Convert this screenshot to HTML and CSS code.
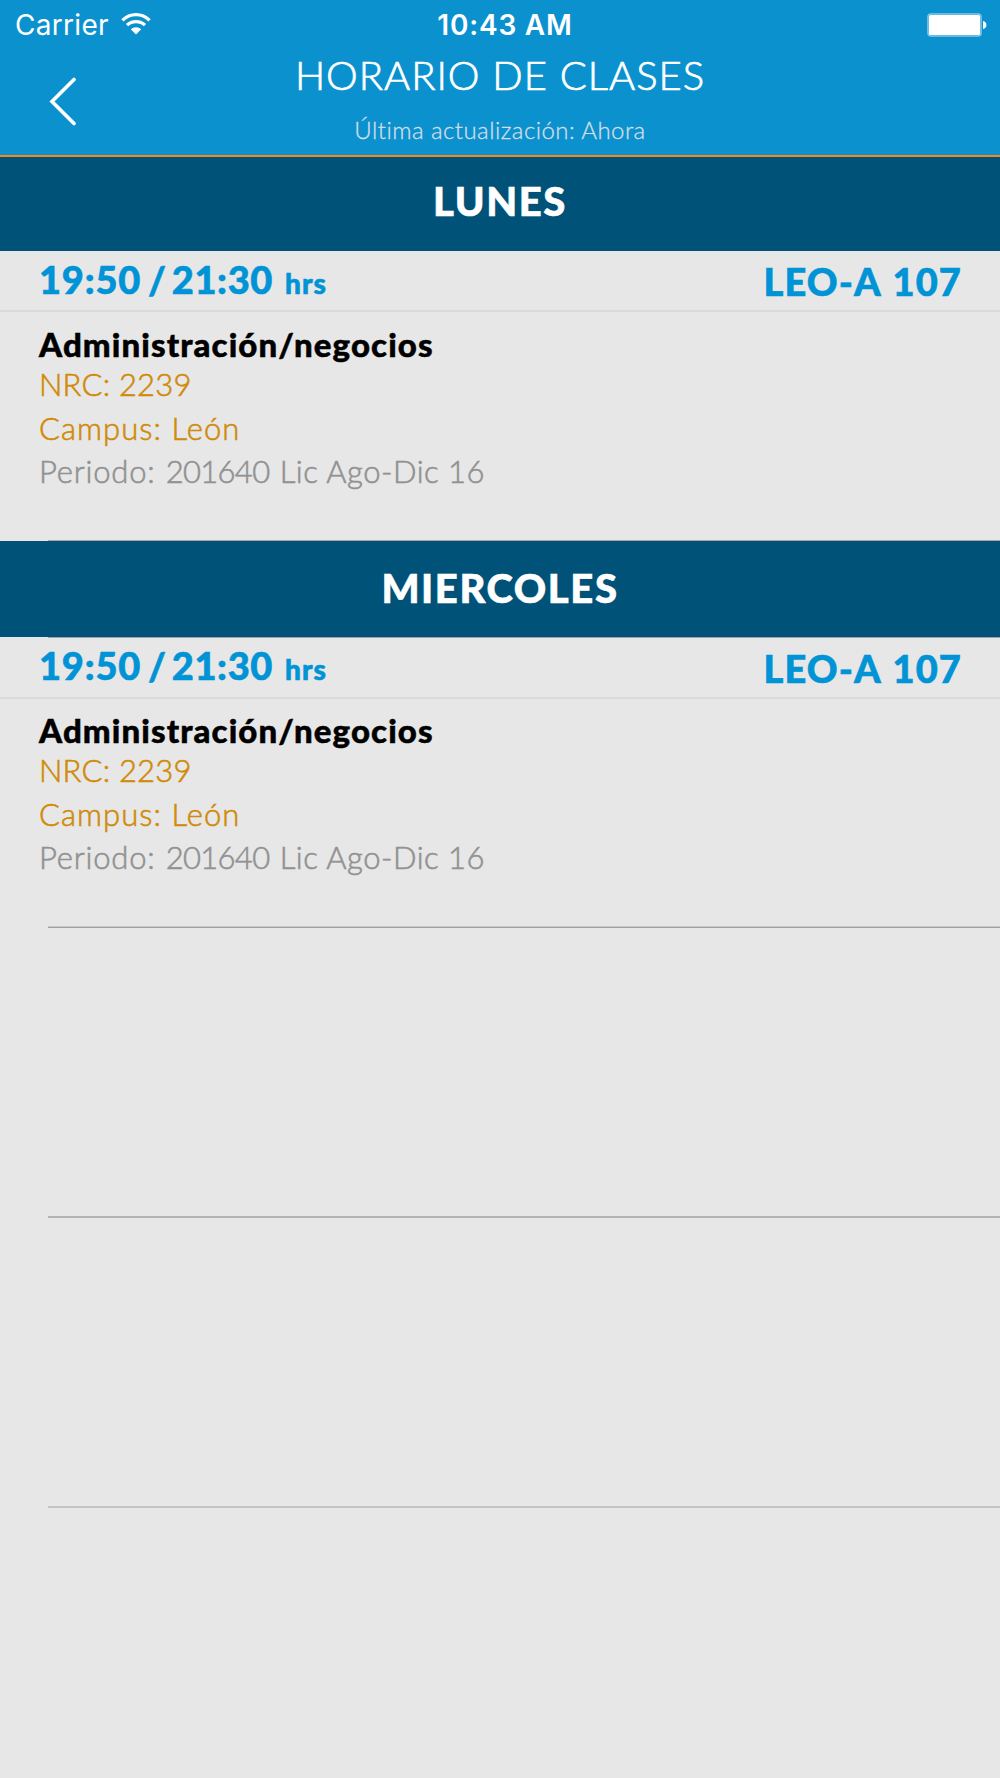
FILE: index.html
```html
<!DOCTYPE html>
<html lang="es">
<head>
<meta charset="utf-8">
<title>Horario de clases</title>
<link rel="stylesheet" href="styles.css">
</head>
<body>
<header class="header">
  <div class="status">
    <div class="carrier"><span class="carrier-name">Carrier</span>
      <svg class="wifi" width="30" height="22" viewBox="0 0 30 22"><g fill="none" stroke="#fff" stroke-width="3.2"><path d="M1.4 7.3C9-.2 21-.2 28.600 7.300"/><path d="M6 12.200C11 7.400 19 7.400 24 12.200"/></g><path d="M15 21.500L9.800 16.300C12.800 13.500 17.200 13.500 20.200 16.300Z" fill="#fff"/></svg>
    </div>
    <span class="clock">10:43 AM</span>
    <svg class="battery" width="60" height="24" viewBox="0 0 60 24"><rect x="1" y="1" width="53" height="22" rx="3" fill="#0c91cf" stroke="#86c8e7" stroke-width="1.600"/><rect x="2" y="2" width="51" height="20" rx="1.500" fill="#fff"/><path d="M56 8C60.500 8.500 60.500 15.500 56 16Z" fill="#fff"/></svg>
  </div>
  <div class="navbar">
    <svg class="back" width="28" height="50" viewBox="0 0 28 50"><path d="M25 2.500L3 24.500L25 46.500" fill="none" stroke="#fff" stroke-width="3.600" stroke-linecap="round" stroke-linejoin="miter"/></svg>
    <div class="titles">
      <h1 class="title">HORARIO DE CLASES</h1>
      <p class="updated">Última actualización: Ahora</p>
    </div>
  </div>
</header>
<main class="schedule">
  <h2 class="day day-first">LUNES</h2>
  <section class="class-row">
    <div class="slot"><div class="time"><span class="from">19:50</span><span class="slash">/</span><span class="to">21:30</span><span class="unit">hrs</span></div><div class="room">LEO-A 107</div></div>
    <div class="details"><h3 class="subject">Administración/negocios</h3><p class="nrc">NRC: 2239</p><p class="campus">Campus: León</p><p class="period">Periodo: <span class="code">201640</span> <span class="term">Lic Ago-Dic 16</span></p></div>
  </section>
  <h2 class="day">MIERCOLES</h2>
  <section class="class-row class-row-last">
    <div class="slot"><div class="time"><span class="from">19:50</span><span class="slash">/</span><span class="to">21:30</span><span class="unit">hrs</span></div><div class="room">LEO-A 107</div></div>
    <div class="details"><h3 class="subject">Administración/negocios</h3><p class="nrc">NRC: 2239</p><p class="campus">Campus: León</p><p class="period">Periodo: <span class="code">201640</span> <span class="term">Lic Ago-Dic 16</span></p></div>
  </section>
  <div class="empty"></div>
  <div class="empty empty-last"></div>
</main>
</body>
</html>
```

FILE: styles.css
```css
* { box-sizing: border-box; margin: 0; padding: 0; }
body { width: 1000px; height: 1778px; overflow: hidden; background: #e7e7e7; font-family: Lato, "Liberation Sans", sans-serif; font-variant-ligatures: none; white-space: nowrap; }
.header { height: 157px; background: #0c91cf; border-bottom: 2px solid #fb871b; color: #fff; display: flex; flex-direction: column; }
.status { height: 50px; display: grid; grid-template-columns: 1fr auto 1fr; font: 28px/51px Inter, sans-serif; }
.carrier { padding-left: 15px; display: flex; gap: 12px; }
.carrier-name { letter-spacing: 0.3px; }
.wifi { margin-top: 13px; }
.clock { font-weight: 600; padding-left: 10px; letter-spacing: 0.8px; }
.battery { justify-self: end; margin: 13px 13px 0 0; }
.navbar { height: 105px; display: grid; grid-template-columns: 120px 760px 120px; }
.back { margin: 27px 0 0 49px; }
.titles { text-align: center; }
.title { font-size: 40px; font-weight: 300; line-height: 50px; letter-spacing: 0.98px; -webkit-text-stroke: 0.7px; }
.updated { font-size: 24px; font-weight: 300; line-height: 32px; color: #d5dfe6; margin-top: 14px; letter-spacing: 0.45px; -webkit-text-stroke: 0.3px; }
.day { height: 96px; background: #005279; color: #fff; font-size: 40px; font-weight: 900; line-height: 94px; letter-spacing: 1.6px; text-align: center; -webkit-text-stroke: 0.6px; }
.day-first { height: 94px; line-height: 89px; }
.class-row { height: 290px; background: linear-gradient(#a8a8aa, #a8a8aa) 48px 100% / 100% 1px no-repeat; }
.class-row-last { height: 291px; background: linear-gradient(#a8a0a2, #a8a0a2) 48px 0 / 100% 1px no-repeat, linear-gradient(#cacaca 50%, #a0a0a2 50%) 48px 100% / 100% 2px no-repeat; }
.slot { height: 61px; display: flex; justify-content: space-between; padding: 0 39px; border-bottom: 2px solid #dadada; color: #0093d5; font-size: 38px; font-weight: 900; line-height: 56px; -webkit-text-stroke: 0.6px; }
.time { display: flex; align-items: baseline; letter-spacing: 0.8px; }
.slash { margin: 0 5px 0 7px; }
.to { letter-spacing: 0.6px; }
.unit { font-size: 28px; margin-left: 12px; letter-spacing: 1.1px; }
.room { line-height: 61px; letter-spacing: 1.1px; word-spacing: 2px; margin-right: -1px; }
.class-row-last .slot { height: 62px; }
.class-row-last .room { line-height: 63px; }
.details { padding: 12px 39px 0; font-size: 31px; font-weight: 300; -webkit-text-stroke: 0.6px; }
.class-row-last .details { padding-top: 11px; }
.subject { font-size: 33px; font-weight: 900; line-height: 40px; letter-spacing: 1.1px; color: #000; -webkit-text-stroke: 0.5px; }
.nrc, .campus, .period { line-height: 44px; color: #d08b09; }
.nrc { margin-top: -2px; letter-spacing: 0.2px; }
.campus { letter-spacing: 1.05px; }
.period { color: #929292; letter-spacing: 0.8px; margin-top: -1px; }
.code { letter-spacing: -0.7px; margin-left: 1px; margin-right: 1px; }
.term { letter-spacing: 0.5px; }
.empty { height: 290px; margin-left: 48px; border-bottom: 2px solid #b4b4b5; }
.empty-last { border-bottom-color: #c4c4c4; }
```
